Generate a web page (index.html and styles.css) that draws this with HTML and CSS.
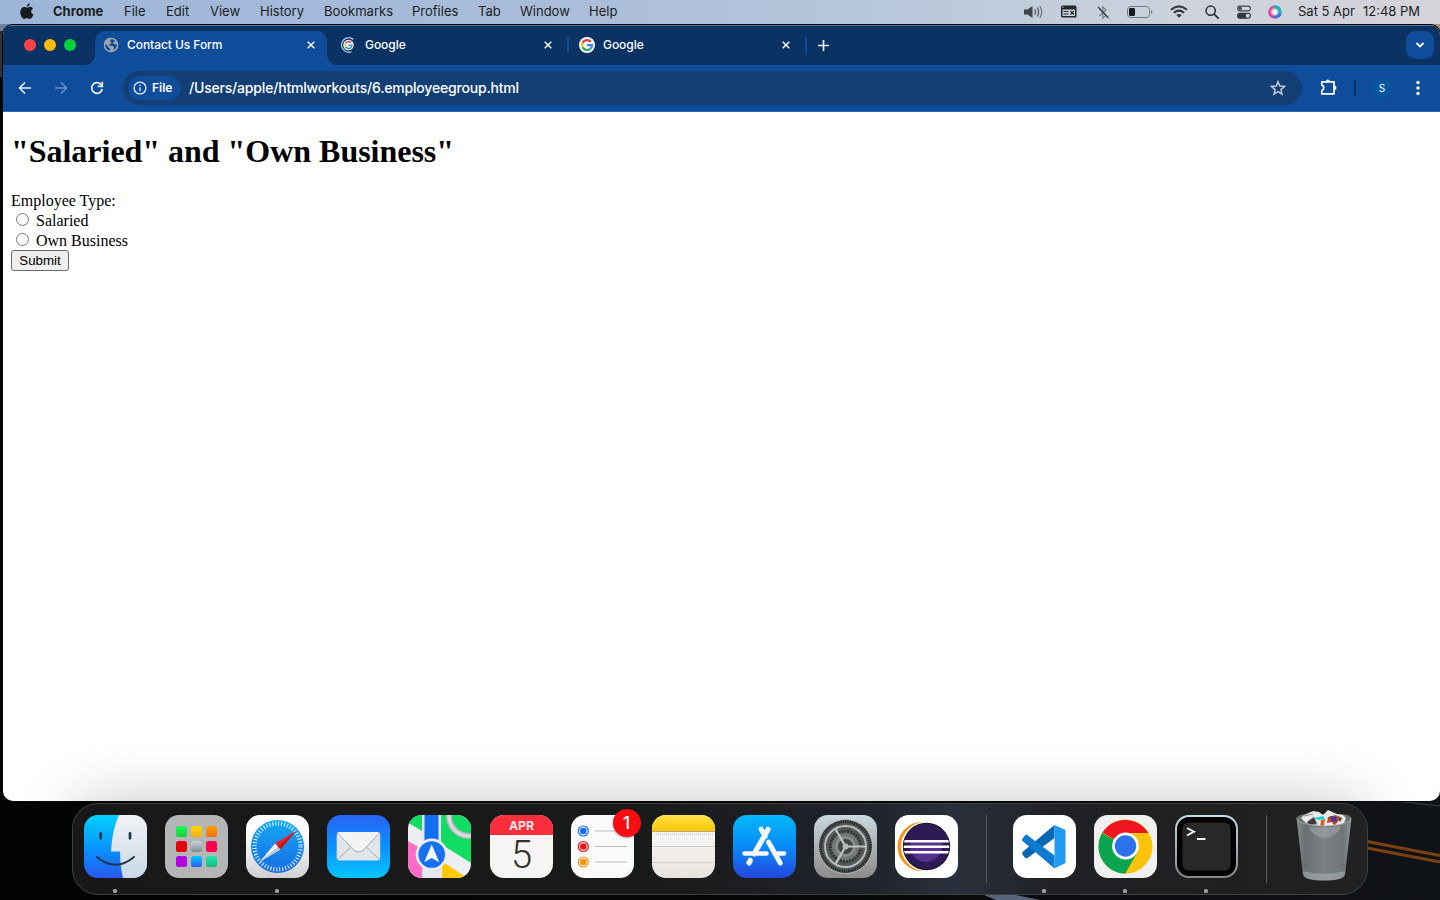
FILE: index.html
```html
<!DOCTYPE html>
<html lang="en">
<head>
<meta charset="utf-8">
<title>Contact Us Form</title>
<link rel="stylesheet" href="styles.css">
</head>
<body>
<svg class="wallpaper" viewBox="0 0 1440 900">
  <defs>
    <linearGradient id="wp" x2="1" y2="0"><stop offset="0" stop-color="#020303"/><stop offset=".5" stop-color="#050505"/><stop offset=".75" stop-color="#0b0c0f"/><stop offset="1" stop-color="#101318"/></linearGradient>
    <linearGradient id="sky" x2="1" y2="0"><stop offset="0" stop-color="#6d83a0"/><stop offset=".8" stop-color="#7d7b78"/><stop offset="1" stop-color="#a58f78"/></linearGradient>
  </defs>
  <rect width="1440" height="900" fill="url(#wp)"/>
  <rect width="1440" height="31" fill="url(#sky)"/>
  <path d="M0 31h3v46H0z" fill="#303236"/>
  <path d="M984 895h32l24 5h-44z" fill="#56657a"/>
  <path d="M1395 801l45 5" stroke="#37424c"/>
  <path d="M1367 841.500l73 14M1367 848l73 14" stroke="#7b420f" stroke-width="3"/>
</svg>

<header class="menubar">
  <svg class="apple" width="14" height="17" viewBox="0 0 14 17"><path fill="#17191d" d="M9.800.3c.1 1.600-1.300 3.300-3 3.400C6.600 2.100 8.100.6 9.800.3zM7 4.700c.8 0 1.600-.9 3-.9 1.200 0 2.400.6 3 1.700-2.700 1.500-2.200 5 .5 6.100-.8 2-2.100 4.300-3.600 4.300-1.200 0-1.600-.7-2.900-.7-1.400 0-1.800.7-2.900.7C2.200 15.900.3 12.400.3 9.300c0-3.300 1.900-5.300 4-5.300 1.300 0 2.100.7 2.700.7z"/></svg>
  <b class="m-app">Chrome</b><span>File</span><span>Edit</span><span>View</span><span>History</span><span>Bookmarks</span><span>Profiles</span><span>Tab</span><span>Window</span><span>Help</span>
  <svg width="19" height="14" viewBox="0 0 19 14"><path fill="#3f434a" d="M0 4.500h3.500L8.500 1v12L3.500 9.500H0z"/><g fill="none" stroke="#4d5259" stroke-width="1.200" stroke-linecap="round"><path d="M11 4.800q1.200 2.200 0 4.400M13.500 3q2.300 4 0 8"/><path d="M16 1.500q3.500 5.500 0 11" stroke="#6b7179"/></g></svg>
  <svg class="up" width="16" height="13" viewBox="0 0 16 13"><rect width="15.500" height="12" y=".5" rx="1.500" fill="#24272b"/><path d="M1.500 4.500h12.500v6.500H1.500z" fill="#c9cfd8"/><path d="M2.500 6.500h5M2.500 9h5M9.500 6l3.500 3.500M13 6L9.500 9.500" stroke="#24272b" stroke-width="1.200"/><circle cx="2" cy="2.200" r=".6" fill="#ccc"/></svg>
  <svg width="12" height="15" viewBox="0 0 12 15"><path d="M2.500 11L9 5 5.800 1.800v11.400L9 10.500 2.500 4" fill="none" stroke="#747a82" stroke-width="1.100"/><path d="M1 2l10.500 11" stroke="#363a40" stroke-width="1.200"/></svg>
  <svg width="26" height="12" viewBox="0 0 26 12"><rect x=".5" y=".5" width="22" height="11" rx="3" fill="none" stroke="#71767e"/><rect x="2" y="2" width="6" height="8" rx="1.300" fill="#17191d"/><path d="M24 4q1.500.8 1.500 2T24 8z" fill="#71767e"/></svg>
  <svg class="up" width="18" height="13" viewBox="0 0 18 13"><g fill="none" stroke="#33373d" stroke-width="2"><path d="M1 4.700q8-6.700 16 0" /><path d="M3.900 7.800q5.100-4.300 10.200 0"/></g><path d="M6.300 10q2.700-2.200 5.400 0L9 12.800z" fill="#33373d"/></svg>
  <svg width="14" height="14" viewBox="0 0 14 14"><circle cx="5.700" cy="5.700" r="4.600" fill="none" stroke="#25282d" stroke-width="1.500"/><path d="M9 9l4.200 4.200" stroke="#25282d" stroke-width="1.700" stroke-linecap="round"/></svg>
  <svg width="14" height="14" viewBox="0 0 14 14"><rect x=".6" y="1.100" width="12.800" height="4.800" rx="2.400" fill="none" stroke="#41454b" stroke-width="1.100"/><circle cx="3.200" cy="3.500" r="1.700" fill="#41454b"/><rect y="7.800" width="14" height="6" rx="3" fill="#33373c"/><circle cx="10.800" cy="10.800" r="2" fill="#d2d6dd"/></svg>
  <svg width="14" height="14" viewBox="0 0 14 14"><defs><linearGradient id="siri" x1="0" y1=".7" x2="1" y2=".4"><stop offset="0" stop-color="#d03c9f"/><stop offset=".4" stop-color="#f04a91"/><stop offset=".6" stop-color="#25a7b2"/><stop offset="1" stop-color="#22b4b8"/></linearGradient><radialGradient id="glow"><stop offset=".3" stop-color="#fff"/><stop offset="1" stop-color="#fff" stop-opacity="0"/></radialGradient></defs><circle cx="7" cy="7" r="6.800" fill="url(#siri)"/><path d="M5 11.500q5 1 7.500-2.500" stroke="#3f6ce0" stroke-width="2.200" fill="none"/><circle cx="6.700" cy="7" r="4.700" fill="url(#glow)"/></svg>
  <span>Sat 5 Apr</span><span>12:48 PM</span>
</header>

<main class="window">
  <div class="tabstrip">
    <div class="lights"><i class="red"></i><i class="amber"></i><i class="green"></i></div>
    <div class="tab active">
      <svg width="16" height="16" viewBox="0 0 16 16"><circle cx="8" cy="8" r="7.200" fill="#9fa5ad"/><path d="M9.200 1.800L7.300 3v1.700L9 6l-2.300.8-.4 1.900 3.400.2 1.400 1.800-.8 3 3-2.600.9-3.200-1.500-.7-1.900-.1-.9-1.400 2-1.500-.4-1.800z" fill="#0f4c9a"/><path d="M1.700 6.300L5 9.200l.6 1.600 1.500.8-.3 2.500-3.300-1.700L1.700 9z" fill="#0f4c9a"/><circle cx="8" cy="8" r="6.600" fill="none" stroke="#9fa5ad" stroke-width="1.300"/></svg>
      <span class="tab-title">Contact Us Form</span>
      <svg class="close" width="8" height="8" viewBox="0 0 8 8"><path d="M.7.7l6.600 6.600M7.300.7L.7 7.300"/></svg>
    </div>
    <div class="tab">
      <svg width="16" height="16" viewBox="0 0 16 16"><path d="M13.300 2.300A7.200 7.200 0 1 0 11.500 14.600" fill="none" stroke="#9cbcf8" stroke-width="1.500"/><circle cx="8.500" cy="8" r="5.200" fill="#fff"/><g fill="none" stroke-width="1.500"><path d="M11 5.700A3.400 3.400 0 0 0 5.500 6.400" stroke="#ea3535"/><path d="M5.500 6.400a3.400 3.400 0 0 0 0 3.200" stroke="#fbb800"/><path d="M5.500 9.600a3.400 3.400 0 0 0 5.200 1" stroke="#23a455"/><path d="M10.700 10.600q1-1 1.200-2.300H8.500" stroke="#4285f4"/></g></svg>
      <span class="tab-title">Google</span>
      <svg class="close" width="8" height="8" viewBox="0 0 8 8"><path d="M.7.7l6.600 6.600M7.300.7L.7 7.300"/></svg>
    </div>
    <i class="divider"></i>
    <div class="tab third">
      <svg width="16" height="16" viewBox="0 0 16 16"><circle cx="8" cy="8" r="8" fill="#fff"/><g fill="none" stroke-width="2.200"><path d="M11.800 4.800A5 5 0 0 0 3.600 5.700" stroke="#ea3535"/><path d="M3.600 5.700a5 5 0 0 0 0 4.600" stroke="#fbb800"/><path d="M3.600 10.300a5 5 0 0 0 7.800 1.400" stroke="#23a455"/><path d="M11.400 11.700q1.600-1.500 1.600-3.500H8" stroke="#4285f4"/></g></svg>
      <span class="tab-title">Google</span>
      <svg class="close" width="8" height="8" viewBox="0 0 8 8"><path d="M.7.7l6.600 6.600M7.300.7L.7 7.300"/></svg>
    </div>
    <i class="divider"></i>
    <svg class="plus" width="11" height="11" viewBox="0 0 11 11"><path d="M5.500 0v11M0 5.500h11" stroke="#e8f0fb" stroke-width="1.700"/></svg>
    <button class="chevron" aria-label="Search tabs"><svg width="10" height="6" viewBox="0 0 10 6"><path d="M1.500 1L5 4.500 8.500 1" fill="none" stroke="#fff" stroke-width="1.800"/></svg></button>
  </div>

  <div class="toolbar">
    <svg width="14" height="14" viewBox="0 0 14 14"><path d="M13 7H2M7 1.500L1.500 7 7 12.500" fill="none" stroke="#e6effb" stroke-width="1.600"/></svg>
    <svg width="14" height="14" viewBox="0 0 14 14"><path d="M1 7h11M7 1.500L12.500 7 7 12.500" fill="none" stroke="#6690c6" stroke-width="1.600"/></svg>
    <svg width="14" height="14" viewBox="0 0 14 14"><path d="M12.200 8A5.300 5.300 0 1 1 10.800 3.300L12 4.500" fill="none" stroke="#eef4fc" stroke-width="1.700"/><path d="M12.300.8V5.400H7.800" fill="none" stroke="#eef4fc" stroke-width="1.700"/></svg>
    <div class="omnibox">
      <div class="chip"><svg width="14" height="14" viewBox="0 0 14 14"><circle cx="7" cy="7" r="5.900" fill="none" stroke="#e5effc" stroke-width="1.300"/><path d="M7 6.200v4M7 3.700v1.400" stroke="#e5effc" stroke-width="1.300"/></svg><span>File</span></div>
      <span class="url">/Users/apple/htmlworkouts/6.employeegroup.html</span>
      <svg class="star" width="16" height="16" viewBox="0 0 16 16"><path d="M8 1.800l1.800 4.300 4.700.4-3.600 3.100L12 14.200 8 11.700l-4 2.500 1.100-4.600L1.500 6.500l4.700-.4z" fill="none" stroke="#c3c9d2" stroke-width="1.500"/></svg>
    </div>
    <svg class="puzzle" width="17" height="17" viewBox="0 0 17 17"><path d="M1.800 2.800H14V14.800H1.800v-3.300q2-.7 2-2.700t-2-2.700z" fill="none" stroke="#fff" stroke-width="1.700" stroke-linejoin="round"/><path d="M5.900 2.500q0-2 2-2t2 2zM14.300 6.500q2.200 0 2.200 2.200t-2.200 2.200z" fill="#fff"/></svg>
    <i class="tool-sep"></i>
    <span class="avatar">S</span>
    <svg class="kebab" width="4" height="16" viewBox="0 0 4 16"><g fill="#fff"><circle cx="2" cy="2.500" r="1.700"/><circle cx="2" cy="8" r="1.700"/><circle cx="2" cy="13.500" r="1.700"/></g></svg>
  </div>

  <div class="page">
    <h1>"Salaried" and "Own Business"</h1>
    <form>
      <div class="caption">Employee Type:</div>
      <label><input type="radio" name="type"><span>Salaried</span></label>
      <label><input type="radio" name="type"><span>Own Business</span></label>
      <button class="submit" type="button">Submit</button>
    </form>
  </div>
</main>

<div class="shade"><div class="shade-cast"></div></div>

<nav class="dock">
  <div class="app running"><svg viewBox="0 0 63 63"><defs><linearGradient id="f1" x2="0" y2="1"><stop stop-color="#04d0fd"/><stop offset=".6" stop-color="#0a8cff"/><stop offset="1" stop-color="#2a57ef"/></linearGradient><linearGradient id="f2" x2="0" y2="1"><stop stop-color="#f1f2f5"/><stop offset="1" stop-color="#cbd8e8"/></linearGradient><clipPath id="sq"><rect width="63" height="63" rx="14"/></clipPath></defs><g clip-path="url(#sq)"><path d="M0 0h63v63H0z" fill="url(#f1)"/><path d="M35 0Q28 15 27 36.500h9Q36 51 39 63h24V0z" fill="url(#f2)"/><path d="M16.700 18.500v4.800M46 18.500v4.800" stroke="#24364b" stroke-width="2.800" stroke-linecap="round"/><path d="M13 42q18.500 15.500 37 0" fill="none" stroke="#263545" stroke-width="2" stroke-linecap="round"/></g></svg></div>
  <div class="app"><svg viewBox="0 0 63 63"><rect width="63" height="63" rx="14" fill="#b4b5b7"/><defs><linearGradient id="g1" x2="0" y2="1"><stop stop-color="#18fb57"/><stop offset="1" stop-color="#18cf38"/></linearGradient><linearGradient id="g2" x2="0" y2="1"><stop stop-color="#ffd900"/><stop offset="1" stop-color="#ffae00"/></linearGradient><linearGradient id="g3" x2="0" y2="1"><stop stop-color="#ffa000"/><stop offset="1" stop-color="#f56e0c"/></linearGradient><linearGradient id="g4" x2="0" y2="1"><stop stop-color="#c9d4db"/><stop offset="1" stop-color="#80888d"/></linearGradient><linearGradient id="g5" x2="0" y2="1"><stop stop-color="#00cbfa"/><stop offset="1" stop-color="#285df5"/></linearGradient><linearGradient id="g6" x2="0" y2="1"><stop stop-color="#1ae8b0"/><stop offset="1" stop-color="#12bb7d"/></linearGradient></defs><g><rect x="11" y="11" width="11" height="11" rx="2.500" fill="url(#g1)"/><rect x="26" y="11" width="11" height="11" rx="2.500" fill="url(#g2)"/><rect x="41" y="11" width="11" height="11" rx="2.500" fill="url(#g3)"/><rect x="11" y="26" width="11" height="11" rx="2.500" fill="#e80009"/><rect x="26" y="26" width="11" height="11" rx="2.500" fill="url(#g4)"/><rect x="41" y="26" width="11" height="11" rx="2.500" fill="#fa064e"/><rect x="11" y="41" width="11" height="11" rx="2.500" fill="#b400e0"/><rect x="26" y="41" width="11" height="11" rx="2.500" fill="url(#g5)"/><rect x="41" y="41" width="11" height="11" rx="2.500" fill="url(#g6)"/></g></svg></div>
  <div class="app running"><svg viewBox="0 0 63 63"><defs><linearGradient id="wg" x2="0" y2="1"><stop offset=".3" stop-color="#fff"/><stop offset="1" stop-color="#d0d0d3"/></linearGradient><linearGradient id="sg" x2="0" y2="1"><stop stop-color="#13aaf2"/><stop offset="1" stop-color="#1a6be6"/></linearGradient></defs><rect width="63" height="63" rx="14" fill="url(#wg)"/><circle cx="31.500" cy="31.500" r="26.500" fill="url(#sg)"/><circle cx="31.500" cy="31.500" r="23" fill="none" stroke="#e7f5ff" stroke-width="4.200" stroke-dasharray="1 2.011"/><path d="M50 16L29 28.500l5.500 6z" fill="#ed2026"/><path d="M14 46.500l15-18 5.500 6z" fill="#f3f3f3"/><path d="M14 46.500l17.700-15 2.800 3z" fill="#bfc9d4"/><path d="M50 16L31.700 31.500l2.800 3z" fill="#b91720"/></svg></div>
  <div class="app"><svg viewBox="0 0 63 63"><defs><linearGradient id="mg" x2="0" y2="1"><stop stop-color="#2864f5"/><stop offset=".5" stop-color="#0c90fd"/><stop offset="1" stop-color="#05c6ff"/></linearGradient></defs><rect width="63" height="63" rx="14" fill="url(#mg)"/><rect x="9.700" y="17" width="43.500" height="28.500" rx="3" fill="#e3e6e9"/><path d="M10.500 44.500l14-13M52.500 44.500l-14-13" stroke="#a0a8b0" stroke-width="1"/><path d="M10.500 18L26 34.500q5.500 5 11 0L52.500 18q-1-1-3-1h-36q-2 0-3 1z" fill="#f3f4f5"/><path d="M10.500 18L26 34.500q5.500 5 11 0L52.500 18" fill="none" stroke="#a0a8b0" stroke-width="1"/></svg></div>
  <div class="app"><svg viewBox="0 0 63 63"><g clip-path="url(#sq)"><path d="M0 0h63v63H0z" fill="#eceef0"/><path d="M0 7.500L14 16V0H0zM33 0h30v48L33 29z" fill="#13dc62"/><path d="M0 26l14 8v29H0z" fill="#ff6cc5"/><path d="M34 46l25 17H34z" fill="#ffc908"/><circle cx="61" cy="1" r="20" fill="none" stroke="#b5b8c0" stroke-width="6"/><circle cx="61" cy="1" r="20" fill="none" stroke="#d9dae0" stroke-width="3"/><path d="M14 0h19v63H14z" fill="#e5e6eb"/><path d="M16.500 0h14v32h-14z" fill="#146ff0"/></g><circle cx="23.700" cy="39.500" r="16" fill="#e9edf4"/><circle cx="23.700" cy="39.500" r="13.300" fill="#1870f3"/><path d="M23.700 29.500l7.500 17.700-7.500-4.200-7.500 4.200z" fill="#f7f9fb"/></svg></div>
  <div class="app"><svg viewBox="0 0 63 63"><g clip-path="url(#sq)"><path d="M0 0h63v63H0z" fill="#f6f5f3"/><path d="M0 0h63v20H0z" fill="#f92f3e"/></g><text x="19" y="15" font-weight="700" font-size="12" textLength="25" lengthAdjust="spacingAndGlyphs" fill="#ffe5e5">APR</text><text class="day" x="31.500" y="52.500" text-anchor="middle" font-weight="300" font-size="38" fill="#303030">5</text></svg></div>
  <div class="app"><svg viewBox="0 0 63 63"><rect width="63" height="63" rx="14" fill="#fafafa"/><path d="M24 16h32M24 31.500h32M24 47h32" stroke="#bdbdbf"/><g fill="none" stroke-width="1.200"><circle cx="12.300" cy="16" r="5" stroke="#126ff1"/><circle cx="12.300" cy="31.500" r="5" stroke="#f0111c"/><circle cx="12.300" cy="47" r="5" stroke="#f69210"/></g><circle cx="12.300" cy="16" r="3.300" fill="#126ff1"/><circle cx="12.300" cy="31.500" r="3.300" fill="#f0111c"/><circle cx="12.300" cy="47" r="3.300" fill="#f69210"/></svg><b class="badge">1</b></div>
  <div class="app"><svg viewBox="0 0 63 63"><defs><linearGradient id="ny" x2="0" y2="1"><stop stop-color="#ffe04b"/><stop offset="1" stop-color="#ffc800"/></linearGradient><linearGradient id="nw" x2="0" y2="1"><stop stop-color="#fcfcfb"/><stop offset="1" stop-color="#e8e3df"/></linearGradient></defs><g clip-path="url(#sq)"><path d="M0 0h63v63H0z" fill="url(#nw)"/><path d="M0 0h63v16H0z" fill="url(#ny)"/><path d="M0 16.500h63" stroke="#bba873"/><path d="M2 19.200h60" stroke="#b9b7b4" stroke-dasharray="1 1"/><path d="M0 31.500h63M0 47.500h63" stroke="#d0cdcb"/></g></svg></div>
  <div class="app"><svg viewBox="0 0 63 63"><defs><linearGradient id="ag" x2="0" y2="1"><stop stop-color="#05b8f9"/><stop offset=".5" stop-color="#088bf8"/><stop offset="1" stop-color="#2547dc"/></linearGradient></defs><rect width="63" height="63" rx="14" fill="url(#ag)"/><g stroke="#a9cef6" stroke-width="4.800" stroke-linecap="round" transform="translate(.4 .9)"><path d="M35 14L21 38.500M17.200 45l-1.500 2.500M28 14l4 7M35.500 27L47 47.500"/></g><g stroke="#f4f8fe" stroke-width="4.600" stroke-linecap="round"><path d="M35 14L21 38.500M17.200 45l-1.500 2.500M28 14l4 7M35.500 27L47 47.500M11.500 38.500h22M45 38.500h6"/></g></svg></div>
  <div class="app"><svg viewBox="0 0 63 63"><defs><linearGradient id="st" x2="0" y2="1"><stop stop-color="#c9d8df"/><stop offset="1" stop-color="#8e8b89"/></linearGradient></defs><rect width="63" height="63" rx="14" fill="url(#st)"/><circle cx="31.500" cy="31.500" r="27" fill="#56595a" stroke="#b6babb" stroke-width="1"/><circle cx="31.500" cy="31.500" r="24.700" fill="none" stroke="#232526" stroke-width="3" stroke-dasharray="1.300 1"/><circle cx="31.500" cy="31.500" r="20.500" fill="#555858" stroke="#b9bebf" stroke-width="1.800"/><circle cx="31.500" cy="31.500" r="15" fill="#737676" stroke="#303233" stroke-width="3" stroke-dasharray="2 1"/><circle cx="31.500" cy="31.500" r="9" fill="#424545" stroke="#858a8a" stroke-width="3"/><path d="M32 31.500h20M31.500 31.500l-10-17.500M31.500 31.500l-10 17.500" stroke="#c0c5c5" stroke-width="2.200"/><circle cx="31.500" cy="31.500" r="3" fill="#b3b8b8"/></svg></div>
  <div class="app"><svg viewBox="0 0 63 63"><rect width="63" height="63" rx="14" fill="#fff"/><circle cx="27" cy="31.500" r="24.500" fill="#f79414"/><circle cx="30.500" cy="31.500" r="24.500" fill="#fff"/><clipPath id="ec"><circle cx="31.500" cy="31.500" r="22.800"/></clipPath><circle cx="31.500" cy="31.500" r="23.700" fill="#141020"/><g clip-path="url(#ec)"><path d="M8 7h48v48H8z" fill="#2e1b56"/><circle cx="31" cy="31" r="16" fill="#54318f"/><path d="M8 7h48v20H8z" fill="#2e1b56"/><path d="M8 25h48v2.400H8zM8 30.500h48v2.400H8zM8 36h48v2.400H8z" fill="#fff"/></g></svg></div>
  <i class="dock-sep"></i>
  <div class="app running"><svg viewBox="0 0 63 63"><rect width="63" height="63" rx="14" fill="#fff"/><path d="M9.500 39.500Q8.500 38 9.500 37L41.500 10v13L14.500 43q-1.500 1-3-.8z" fill="#0967b4"/><path d="M9.500 23.500Q8.500 25 9.500 26L41.500 53.500V40.500L14.500 20.200q-1.500-1-3 .8z" fill="#0e7bd1"/><path d="M41.500 10l11 5v33l-11 5.500z" fill="#1d9cf2"/></svg></div>
  <div class="app running"><svg viewBox="0 0 63 63"><rect width="63" height="63" rx="14" fill="#f0f0f0"/><circle cx="31.500" cy="31.500" r="27" fill="#ffc20b"/><path d="M31.500 31.500L8.100 18a27 27 0 0 0 23.400 40.500L43.200 38z" fill="#0ba34e"/><path d="M31.500 31.500L8.500 17.400A27 27 0 0 1 54.300 18H31.500L19 35z" fill="#ed1620"/><path d="M31.500 18h22.800a27 27 0 0 1-22.800 40.500L43.200 38z" fill="#ffc20b"/><circle cx="31.500" cy="31" r="13.400" fill="#fff"/><circle cx="31.500" cy="31" r="10.700" fill="#2c72ed"/></svg></div>
  <div class="app running"><svg viewBox="0 0 63 63"><defs><linearGradient id="tg" x2="0" y2="1"><stop stop-color="#c5dde5"/><stop offset="1" stop-color="#8a8584"/></linearGradient></defs><rect width="63" height="63" rx="14" fill="url(#tg)"/><rect x="2" y="2" width="59" height="59" rx="12" fill="#030202"/><rect x="7.500" y="7.500" width="48" height="48" rx="6" fill="#282829"/><path d="M12 13l7 3.700-7 3.800M22 24h8.500" fill="none" stroke="#f4f4f4" stroke-width="1.900"/></svg></div>
  <i class="dock-sep"></i>
  <div class="app trash"><svg viewBox="0 0 63 75"><defs><linearGradient id="bin" x2="1" y2="0"><stop stop-color="#8b9093"/><stop offset=".15" stop-color="#6a6f72"/><stop offset=".5" stop-color="#7c8184"/><stop offset=".85" stop-color="#6e7376"/><stop offset="1" stop-color="#94999c"/></linearGradient></defs><path d="M3.500 10Q5 6.500 14 6h34q9 .5 10.500 4Q57 18 31 18.500 5 18 3.500 10z" fill="#6c7072"/><path d="M8 10l3-3 9-4 6 1 4 3 5-5 9 4 6 1 3 3-2 5-8 3-12 1H22l-9-4z" fill="#e9e9e8"/><path d="M11 8l9-2M14 14l7-5 3 7-8 1zM44 8l5 2-2 4" fill="#3d3438" stroke="#8c8989"/><path d="M21 10l9-2 2 3-7 1z" fill="#10d6dc"/><path d="M28 12l4-1-1 7-4 1z" fill="#dc5d2d"/><path d="M35 9l8-2 4 4-5 6-8-2z" fill="#bc4724"/><path d="M37 8l6 1 1 4-5 1z" fill="#3b3a9c"/><path d="M34 15l5-1 2 4-6 1z" fill="#eee"/><path d="M3.500 10Q6 17.500 31 18 56 17.500 58.500 10L52 66.500q-1 6-21 6t-21-6z" fill="url(#bin)"/><path d="M3.500 10Q6 17.500 31 18 56 17.500 58.500 10" fill="none" stroke="#a9adaf" stroke-width=".8"/><path d="M16 19q15 2 32-1-2 8-14 12-14 0-18-11z" fill="#b7bbbd" opacity=".4"/><path d="M10 63q21 6 42 0l-.5 4q-2 5.300-20.500 5.300T10.500 67z" fill="#a9adaf" opacity=".6"/></svg></div>
</nav>
</body>
</html>
```
FILE: styles.css
```css
* { box-sizing: border-box; }
html, body { margin: 0; width: 1440px; height: 900px; overflow: hidden; }
body { position: relative; background: #050505; font-family: Inter, "Liberation Sans", sans-serif; }
svg { display: block; flex: none; }
.wallpaper { position: absolute; inset: 0; width: 1440px; height: 900px; }

.menubar {
  position: relative;
  height: 24px;
  padding-left: 20px;
  display: grid;
  grid-template-columns: 33px 71px 42px 44px 50px 64px 88px 66px 42px 69px 435px 37px 36px 30px 43px 35px 32px 31px 30px 65px auto;
  align-items: center;
  background: linear-gradient(90deg, #9db6d8 0%, #a9bcda 38%, #b7c8da 62%, #cdd2dc 82%, #d4d3d9 100%);
  color: #1b1e23;
  font-size: 13px;
  white-space: nowrap;
}
.menubar span, .menubar b { padding-bottom: 2px; }
.apple { margin-top: -2px; }
.up { margin-top: -2px; }
.m-app { font-weight: 700; }

.window {
  position: absolute;
  left: 3px;
  top: 25px;
  width: 1437px;
  height: 776px;
  border-radius: 10px;
  overflow: hidden;
  background: #fff;
  box-shadow: 0 0 0 1px #08090b;
}
.tabstrip {
  height: 40px;
  display: flex;
  align-items: center;
  background: #0a3262;
  border-top: 1px solid #587497;
  padding: 0 6px 1px 0;
}
.lights { display: flex; gap: 8px; padding-left: 21px; width: 92px; }
.lights i { width: 12px; height: 12px; border-radius: 50%; }
.red { background: #fe4147; }
.amber { background: #fdb90b; }
.green { background: #07d03f; }
.tab { position: relative; display: flex; align-items: center; height: 34px; width: 232px; padding: 0 12px 0 8px; color: #fff; }
.tab:not(.active) { width: 240px; padding: 0 15px 0 13px; }
.tab.third { width: 236px; padding: 0 15px 0 10px; }
.tab:not(.active) .tab-title { margin-left: 9px; }
.tab.third .tab-title { margin-left: 8px; }
.tab.active { align-self: flex-end; height: 34px; margin-bottom: -1px; background: #0f4c9a; border-radius: 10px 10px 0 0; padding-bottom: 6px; }
.tab.active::before, .tab.active::after { content: ""; position: absolute; bottom: 0; width: 10px; height: 10px; }
.tab.active::before { left: -10px; background: radial-gradient(circle at 0 0, transparent 9.5px, #0f4c9a 10px); }
.tab.active::after { right: -10px; background: radial-gradient(circle at 100% 0, transparent 9.5px, #0f4c9a 10px); }
.tab-title { flex: 1; margin-left: 8px; padding-bottom: 1px; font-size: 12px; font-weight: 500; letter-spacing: -.06px; white-space: nowrap; }
.close path { stroke: #f5f8fd; stroke-width: 1.500; }
.divider { width: 2px; height: 16px; border-radius: 1px; background: #0f4c9a; }
.third + .divider { margin-left: 0; }
.plus { margin-left: 11px; }
.chevron { width: 28px; height: 28px; margin-left: auto; padding: 0; border: 0; border-radius: 9px; background: #0f4c9a; display: grid; place-items: center; }

.toolbar { height: 47px; background: #0f4c9a; border-bottom: 1px solid #2967b5; display: flex; align-items: center; padding-left: 15px; }
.toolbar > svg:nth-child(2), .toolbar > svg:nth-child(3) { margin-left: 22px; }
.omnibox { width: 1179px; height: 34px; margin-left: 19px; border-radius: 17px; background: #133f74; display: flex; align-items: center; padding: 0 16px 0 5px; color: #fff; }
.chip { width: 53px; height: 24px; border-radius: 12px; background: #0f4c9a; display: flex; align-items: center; gap: 5px; padding-left: 5px; font-size: 12px; font-weight: 600; }
.chip span { padding-bottom: 1px; }
.url { margin-left: 8px; padding-bottom: 2px; flex: 1; font-size: 14px; font-weight: 500; letter-spacing: -.19px; white-space: nowrap; }
.puzzle { margin: -2px 0 0 18px; }
.tool-sep { width: 2px; height: 16px; margin-left: 17px; background: #0a3262; }
.avatar { width: 20px; height: 20px; margin-left: 16px; border-radius: 50%; background: #0657a0; color: #fff; font-size: 10px; display: grid; place-items: center; }
.kebab { margin-left: 24px; }

.page { padding: 21px 8px 0; font-family: "Liberation Serif", serif; font-size: 16px; color: #000; }
h1 { margin: 0; font-size: 32px; line-height: 37px; letter-spacing: -.02px; }
form { margin-top: 21px; display: flex; flex-direction: column; align-items: flex-start; }
.caption { height: 19px; line-height: 20px; }
label { display: flex; height: 20px; line-height: 22px; }
label input { width: 13px; height: 13px; margin: 3px 7px 0 5px; }
.submit { width: 58px; height: 21px; margin-top: 0; padding: 0; border: 1px solid #6b6b6b; border-radius: 3px; background: #efefef; color: #000; font: 13.300px/18px "Liberation Sans", sans-serif; }

.shade { position: absolute; left: 3px; top: 700px; width: 1437px; height: 101px; overflow: hidden; border-radius: 0 0 10px 10px; }
.shade-cast { height: 91px; margin: 103px 73px 0 69px; border-radius: 27px; box-shadow: 0 0 64px rgba(0, 0, 0, .24); }
.dock {
  position: absolute;
  left: 72px;
  top: 803px;
  width: 1296px;
  height: 92px;
  border: 1px solid #3e4042;
  border-radius: 26px;
  background: linear-gradient(90deg, #181818 0%, #191a1a 45%, #20242c 62%, #2a303b 68%, #202126 76%, #201f1f 90%, #222224 100%);
  display: flex;
  padding: 11px 0 0 2px;
}
.app { position: relative; width: 81.1px; height: 80px; display: flex; justify-content: center; }
.app svg { width: 63px; height: 63px; }
.app text { font-family: Inter, sans-serif; }
.app .day { font-family: Roboto, sans-serif; }
.running::after { content: ""; position: absolute; left: 38px; top: 74px; width: 4px; height: 4px; border-radius: 1.500px; background: #a0a0a1; }
.badge { position: absolute; left: 51px; top: -6px; width: 28px; height: 28px; border-radius: 50%; background: #f70e13; color: #fff; font-size: 17px; font-weight: 500; line-height: 28px; text-align: center; box-shadow: 0 1px 2px rgba(0, 0, 0, .35); }
.dock-sep { width: 1px; height: 68px; margin: 0 17.500px 0 18.500px; background: #57595c; }
.trash svg { height: 75px; margin-top: -7px; }
```
